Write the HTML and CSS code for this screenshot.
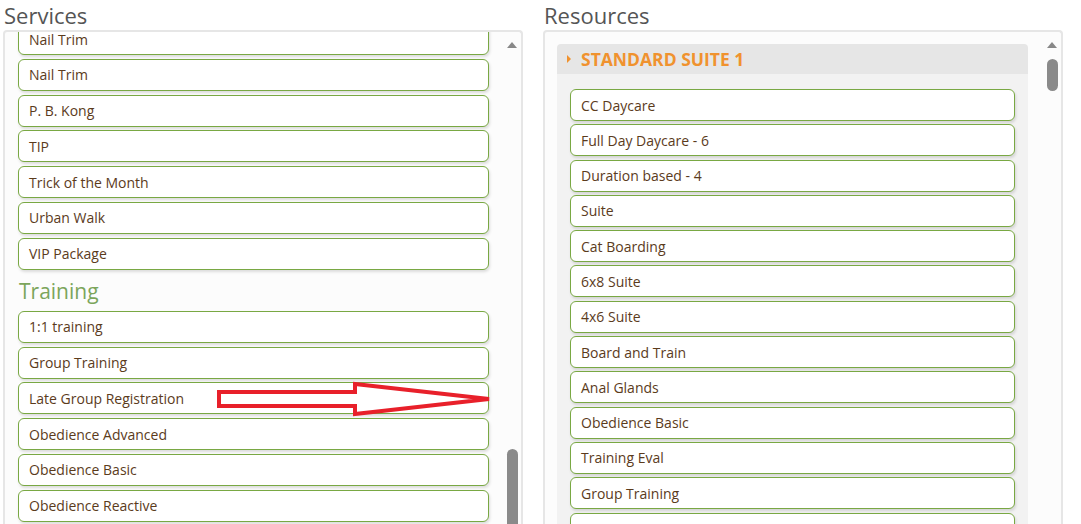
FILE: index.html
```html
<!DOCTYPE html>
<html lang="en">

<head>
  <meta charset="UTF-8">
  <meta name="viewport" content="width=device-width, initial-scale=1.0">
  <title>Services and Resources</title>
  <link rel="stylesheet" href="styles.css">
</head>

<body>
  <div class="page">
    <div class="column">
      <h2 class="title">Services</h2>
      <div class="panel">
        <div class="scroll" id="services">
          <div class="item">Nail Trim</div>
          <div class="item">Nail Trim</div>
          <div class="item">P. B. Kong</div>
          <div class="item">TIP</div>
          <div class="item">Trick of the Month</div>
          <div class="item">Urban Walk</div>
          <div class="item">VIP Package</div>
          <h3 class="group-title">Training</h3>
          <div class="item">1:1 training</div>
          <div class="item">Group Training</div>
          <div class="item">Late Group Registration</div>
          <div class="item">Obedience Advanced</div>
          <div class="item">Obedience Basic</div>
          <div class="item">Obedience Reactive</div>
          <div class="item">Puppy Class</div>
          <div class="item">Puppy Social</div>
          <div class="item">Rally</div>
          <div class="item">Training Eval</div>
        </div>
        <div class="scrollbar">
          <span class="arrow-up"></span>
          <span class="thumb thumb-low"></span>
        </div>
      </div>
    </div>

    <div class="column">
      <h2 class="title">Resources</h2>
      <div class="panel">
        <div class="scroll scroll-res">
          <div class="suite">
            <div class="suite-head"><span class="caret"></span>STANDARD SUITE 1</div>
            <div class="suite-body">
              <div class="item item-res">CC Daycare</div>
              <div class="item item-res">Full Day Daycare - 6</div>
              <div class="item item-res">Duration based - 4</div>
              <div class="item item-res">Suite</div>
              <div class="item item-res">Cat Boarding</div>
              <div class="item item-res">6x8 Suite</div>
              <div class="item item-res">4x6 Suite</div>
              <div class="item item-res">Board and Train</div>
              <div class="item item-res">Anal Glands</div>
              <div class="item item-res">Obedience Basic</div>
              <div class="item item-res">Training Eval</div>
              <div class="item item-res">Group Training</div>
              <div class="item item-res">1:1 training</div>
            </div>
          </div>
        </div>
        <div class="scrollbar">
          <span class="arrow-up"></span>
          <span class="thumb thumb-top"></span>
        </div>
      </div>
    </div>
  </div>

  <svg class="markup" width="1081" height="524" viewBox="0 0 1081 524">
    <polygon points="219,392 355,392 355,384 489,399 355,414 355,406 219,406" fill="none" stroke="#e8202a" stroke-width="4" stroke-linejoin="miter" />
  </svg>

  <script>
    // the service list is shown scrolled down a little
    document.getElementById('services').scrollTop = 9
  </script>
</body>

</html>
```

FILE: styles.css
```css
html,
body {
  margin: 0;
  height: 100%;
  overflow: hidden;
  background: #fff;
  font-family: "Open Sans", "Noto Sans", sans-serif;
}

.page {
  display: flex;
  gap: 20px;
  padding-left: 3px;
}

.column {
  width: 520px;
}

.title {
  margin: 0;
  padding-left: 1px;
  height: 30px;
  line-height: 30px;
  font-size: 22px;
  font-weight: 400;
  color: #555;
}

.panel {
  display: flex;
  height: 620px;
  background: #fcfcfc;
  border: 2px solid #e6e6e6;
  border-bottom: none;
  border-radius: 4px 4px 0 0;
}

.scroll {
  flex: 1;
  overflow: hidden;
  padding: 0 14px 0 13px;
}

.scroll-res {
  padding: 12px 15px 0 12px;
}

.scrollbar {
  display: flex;
  flex-direction: column;
  align-items: center;
  width: 18px;
  padding-top: 10px;
}

.arrow-up {
  width: 0;
  height: 0;
  border-left: 5.5px solid transparent;
  border-right: 5.5px solid transparent;
  border-bottom: 6px solid #888;
}

.thumb {
  width: 11px;
  height: 32px;
  background: #8a8a8a;
  border-radius: 6px;
}

.thumb-top {
  margin-top: 11px;
}

.thumb-low {
  margin-top: 401px;
  height: 120px;
}

.item {
  display: flex;
  align-items: center;
  box-sizing: border-box;
  height: 32px;
  margin-bottom: 3.8px;
  padding: 0 10px;
  background: #fff;
  border: 1px solid #79a843;
  border-radius: 6px;
  box-shadow: 1px 2px 3px rgba(0, 0, 0, .13);
  font-size: 14px;
  color: #5b3b1c;
  white-space: nowrap;
}

.item-res {
  margin-bottom: 3.3px;
}

.group-title {
  margin: 6px 0 5px 1px;
  height: 30px;
  line-height: 30px;
  font-size: 21px;
  font-weight: 400;
  color: #7ba55b;
}

.suite {
  border-radius: 4px 4px 0 0;
  overflow: hidden;
}

.suite-head {
  display: flex;
  align-items: center;
  height: 30px;
  padding-left: 10px;
  background: #e6e6e6;
  font-size: 17.5px;
  font-weight: 700;
  color: #f0922e;
}

.caret {
  width: 0;
  height: 0;
  margin-right: 10px;
  border-top: 4px solid transparent;
  border-bottom: 4px solid transparent;
  border-left: 4px solid #f0922e;
}

.suite-body {
  height: 600px;
  padding: 15px 13px 0;
  background: #f2f2f2;
}

.markup {
  position: absolute;
  top: 0;
  left: 0;
  pointer-events: none;
}
```
